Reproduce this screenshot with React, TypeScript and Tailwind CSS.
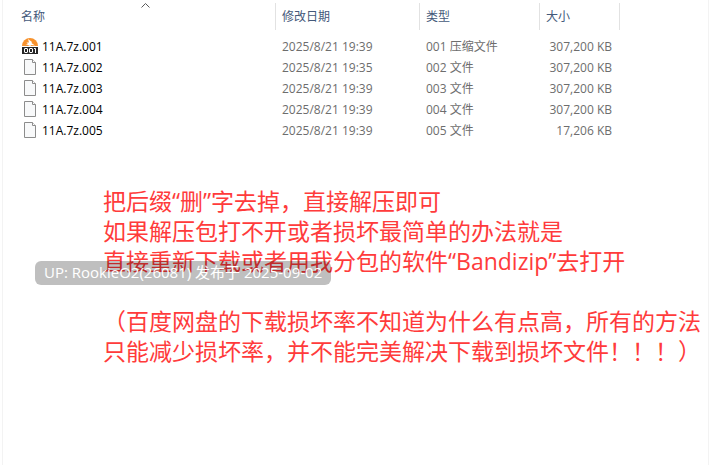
type FileRow = {
  name: string;
  modified: string;
  type: string;
  size: string;
  archive?: boolean;
};

const files: FileRow[] = [
  { name: "11A.7z.001", modified: "2025/8/21 19:39", type: "001 压缩文件", size: "307,200 KB", archive: true },
  { name: "11A.7z.002", modified: "2025/8/21 19:35", type: "002 文件", size: "307,200 KB" },
  { name: "11A.7z.003", modified: "2025/8/21 19:39", type: "003 文件", size: "307,200 KB" },
  { name: "11A.7z.004", modified: "2025/8/21 19:39", type: "004 文件", size: "307,200 KB" },
  { name: "11A.7z.005", modified: "2025/8/21 19:39", type: "005 文件", size: "17,206 KB" },
];

function ArchiveIcon() {
  return (
    <svg className="mb-px size-4 shrink-0" viewBox="0 0 16 16" aria-hidden="true">
      <path d="M0 8a8 8 0 0 1 16 0z" fill="#f7922d" />
      <path d="M6 1l4 3-.5 1L13 7.500 9.500 7 8 8 6 7H3.500L6 6 4.500 4.500H7z" fill="#fff" />
      <rect y="9" width="16" height="7" fill="#262626" />
      <g fill="none" stroke="#fff">
        <rect x="2.5" y="10.5" width="3" height="4" rx="0.5" />
        <rect x="7.5" y="10.5" width="3" height="4" rx="0.5" />
        <path d="M12 10.5h1.500V15" />
      </g>
    </svg>
  );
}

function FileIcon() {
  return (
    <svg className="mb-px size-4 shrink-0" viewBox="0 0 16 16" aria-hidden="true">
      <path d="M2.500.5h8l3 3v12h-11z" fill="#f8f9fa" stroke="#8c8c8c" />
      <path d="M10.500.5v3h3" fill="#fff" stroke="#8c8c8c" />
    </svg>
  );
}

const headCell = "border-r border-[#e2e2e2] p-0 text-left font-normal";

export default function App() {
  return (
    <main className="relative min-h-screen bg-white pl-[2px] pr-[7px] font-['Open_Sans','Noto_Sans_CJK_SC',sans-serif]">
      <div className="min-h-screen border-x border-[#f3f3f3] pt-[3px]">
        <table className="ml-3 w-[605px] table-fixed border-separate border-spacing-0 whitespace-nowrap text-xs">
          <colgroup>
            <col className="w-[261px]" />
            <col className="w-36" />
            <col className="w-[120px]" />
            <col className="w-20" />
          </colgroup>
          <thead className="text-[#44597a]">
            <tr className="h-[27px]">
              <th scope="col" aria-sort="ascending" className={`${headCell} relative`}>
                <button type="button" className="pl-[6px]">名称</button>
                <svg className="absolute inset-x-0 top-0 mx-auto h-[5px] w-[9px]" viewBox="0 0 9 5" aria-hidden="true">
                  <path d="M.5 4.500l4-4 4 4" fill="none" stroke="#5a5a5a" />
                </svg>
              </th>
              <th scope="col" className={headCell}>
                <button type="button" className="pl-[6px]">修改日期</button>
              </th>
              <th scope="col" className={headCell}>
                <button type="button" className="pl-[6px]">类型</button>
              </th>
              <th scope="col" className={headCell}>
                <button type="button" className="pl-[6px]">大小</button>
              </th>
            </tr>
          </thead>
          <tbody className="text-[#6d6d6d] before:block before:h-[6px] before:content-['']">
            {files.map((file) => (
              <tr key={file.name} className="h-[21px]">
                <td className="p-0 pl-[7px] text-black">
                  <span className="flex items-center gap-1">
                    {file.archive ? <ArchiveIcon /> : <FileIcon />}
                    {file.name}
                  </span>
                </td>
                <td className="p-0 pl-[6px]">{file.modified}</td>
                <td className="p-0 pl-[6px]">{file.type}</td>
                <td className="p-0 pr-2 text-right">{file.size}</td>
              </tr>
            ))}
          </tbody>
        </table>

        <section className="ml-[100px] mt-[45px] whitespace-nowrap text-[23px] leading-[30px] text-[#ff3b3b]">
          <p>把后缀“删”字去掉，直接解压即可</p>
          <p>如果解压包打不开或者损坏最简单的办法就是</p>
          <p>直接重新下载或者用我分包的软件“Bandizip”去打开</p>
          <p className="mt-[30px]">（百度网盘的下载损坏率不知道为什么有点高，所有的方法</p>
          <p>只能减少损坏率，并不能完美解决下载到损坏文件！！！）</p>
        </section>
      </div>

      <div className="absolute left-[35px] top-[261px] whitespace-nowrap rounded-md bg-black/25 px-[9px] pb-[2px] text-[15px] leading-[22px] text-white">
        UP: RookieO2(26081) 发布于 2025-09-02
      </div>
    </main>
  );
}
